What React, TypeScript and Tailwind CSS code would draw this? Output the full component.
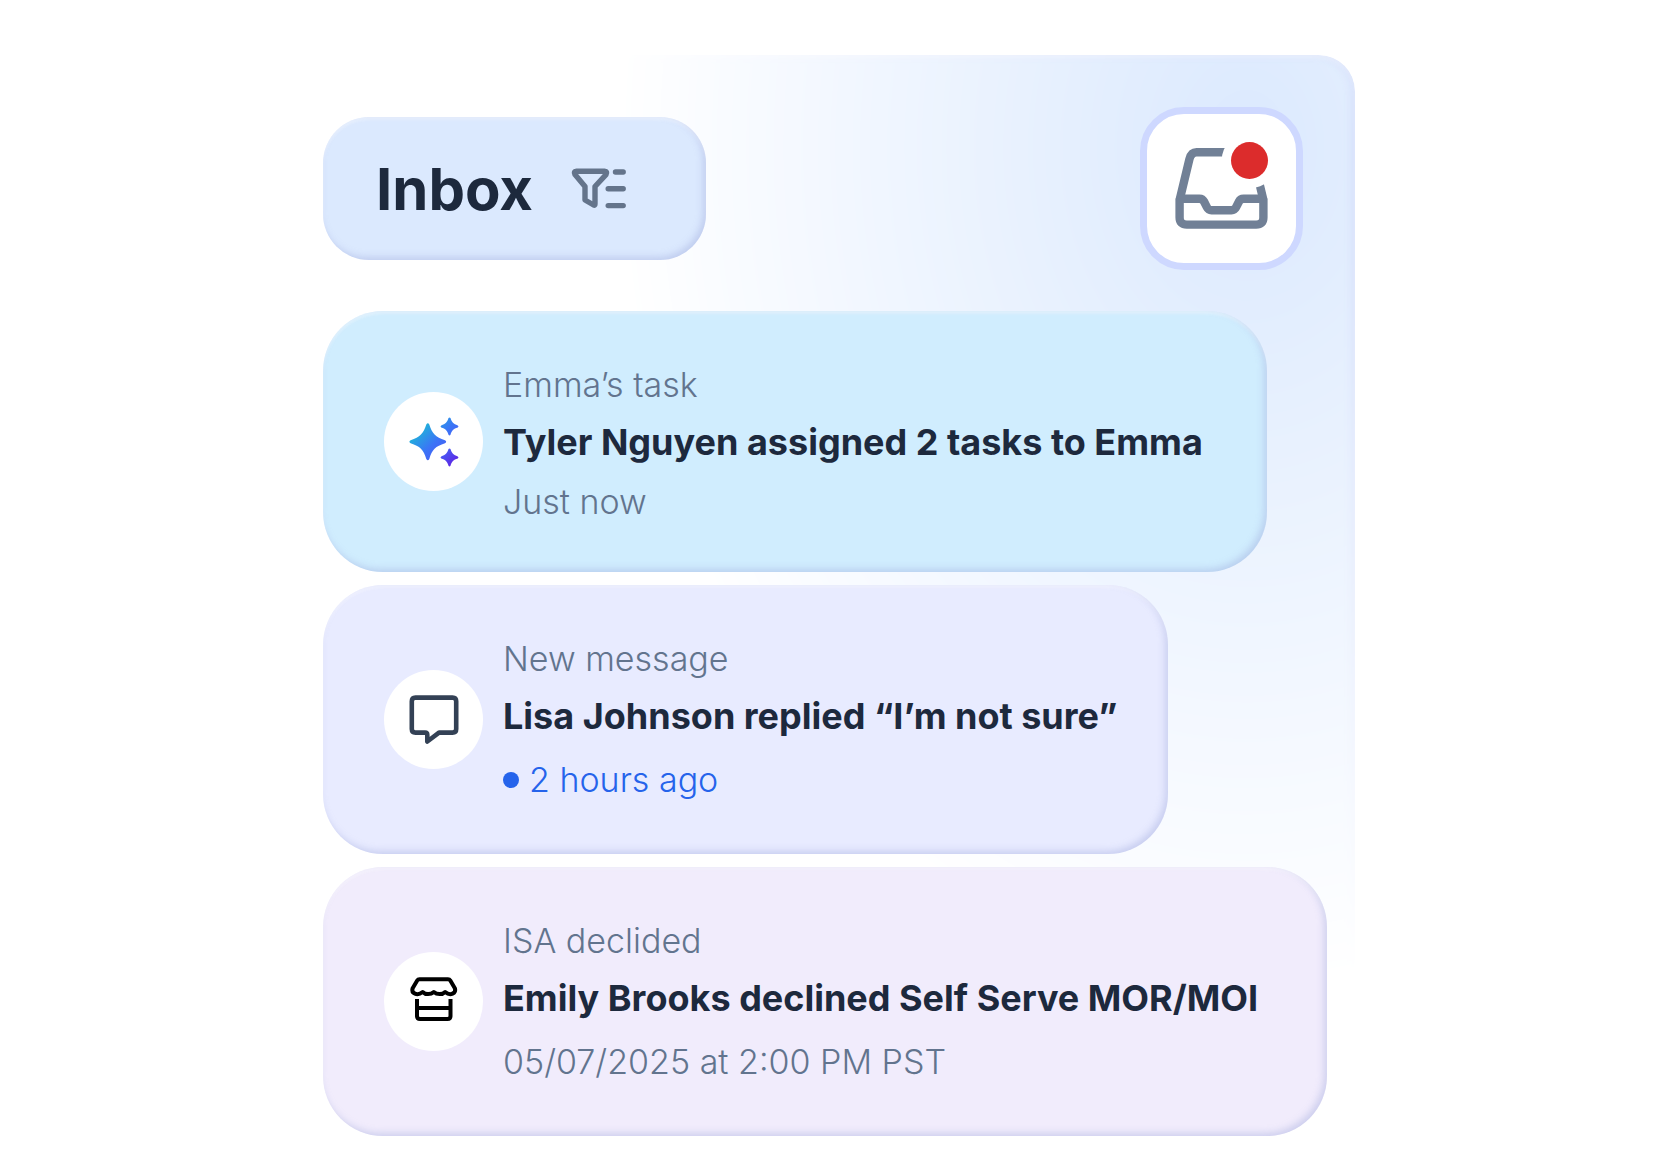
import React from 'react';

// ─── Types ────────────────────────────────────────────────────────────────────

interface Notification {
  id: number;
  label: string;
  title: string;
  time: string;
  unread?: boolean;
  icon: React.ReactNode;
  cardClass: string;
  timeClass: string;
}

// ─── Icons ────────────────────────────────────────────────────────────────────

const FilterIcon: React.FC = () => (
  <svg width="56" height="43" viewBox="0 0 56 43" fill="none" stroke="#64748b" strokeWidth="5.4" strokeLinecap="round" strokeLinejoin="round" aria-hidden="true">
    <path d="M5.5 4.2H33.5Q36.8 4.4 35 7.6L24 19.5V37Q24 38.6 22.6 38L14 33V19.5L4 7.6Q2.2 4.4 5.5 4.2Z" />
    <path d="M44.5 5H52.2M37.2 21.8H52.2M37.2 38.6H52.2" />
  </svg>
);

const TrayIcon: React.FC = () => (
  <svg width="95" height="84" viewBox="0 0 95 84" fill="none" stroke="#718096" strokeWidth="8.4" className="overflow-visible" aria-hidden="true">
    <path d="M5.6 53L15.4 12.2Q17.2 5.3 22.5 5.3H72.5Q77.8 5.3 79.6 12.2L89.4 53" />
    <path d="M5.6 51.7V70.5Q5.6 77.6 12.8 77.6H82.2Q89.4 77.6 89.4 70.5V51.7" />
    <path d="M5.6 51.7H25.5Q28.6 51.7 30 54.5L33 60.4Q34.4 63.2 37.5 63.2H57.5Q60.6 63.2 62 60.4L65 54.5Q66.4 51.7 69.5 51.7H89.4" />
    <circle cx="75.5" cy="13.5" r="27.8" fill="#ffffff" stroke="none" />
    <circle cx="75.5" cy="13.5" r="18.5" fill="#dc2c2c" stroke="none" />
  </svg>
);

const SparklesIcon: React.FC = () => (
  <svg width="50" height="50" viewBox="0 0 50 50" className="overflow-visible" aria-hidden="true">
    <defs>
      <linearGradient id="sparkle" x1="6" y1="6" x2="44" y2="46" gradientUnits="userSpaceOnUse">
        <stop offset="0" stopColor="#16c8d0" />
        <stop offset="0.5" stopColor="#3b74f6" />
        <stop offset="0.7" stopColor="#4562f5" />
        <stop offset="1" stopColor="#5b2be6" />
      </linearGradient>
    </defs>
    <g fill="url(#sparkle)">
      <path d="M17.3 7.6Q18.8 5 20.3 7.6C23 16.5 26.5 20.4 36 23.3Q38.4 24.8 36 26.3C26.5 29.2 23 33 20.3 42Q18.8 44.6 17.3 42C14.6 33 11 29.2 1.6 26.3Q-.8 24.8 1.6 23.3C11 20.4 14.6 16.5 17.3 7.6Z" />
      <path d="M39.5 1.1Q40.5 -.3 41.5 1.1C42.8 5.4 44.4 7.1 48.8 8.4Q50.2 9.4 48.8 10.4C44.4 11.7 42.8 13.4 41.5 17.7Q40.5 19.1 39.5 17.7C38.2 13.4 36.6 11.7 32.2 10.4Q30.8 9.4 32.2 8.4C36.6 7.1 38.2 5.4 39.5 1.1Z" />
      <path d="M39.5 32.1Q40.5 30.7 41.5 32.1C42.8 36.4 44.4 38.1 48.8 39.4Q50.2 40.4 48.8 41.4C44.4 42.7 42.8 44.4 41.5 48.7Q40.5 50.1 39.5 48.7C38.2 44.4 36.6 42.7 32.2 41.4Q30.8 40.4 32.2 39.4C36.6 38.1 38.2 36.4 39.5 32.1Z" />
    </g>
  </svg>
);

const MessageIcon: React.FC = () => (
  <svg width="50" height="50" viewBox="0 0 50 50" fill="none" stroke="#334155" strokeWidth="4.6" strokeLinejoin="round" aria-hidden="true">
    <path d="M6.5 2.6H43.5Q47.2 2.6 47.2 6.3V34Q47.2 37.6 43.5 37.6H30L18.3 46.5V39.8Q18.3 37.6 16.1 37.6H6.5Q2.8 37.6 2.8 34V6.3Q2.8 2.6 6.5 2.6Z" />
  </svg>
);

const StoreIcon: React.FC = () => (
  <svg width="50" height="50" viewBox="0 0 50 50" fill="none" stroke="#000000" strokeWidth="4" strokeLinejoin="round" aria-hidden="true">
    <path d="M10.5 2.2H39Q40.5 2.2 41.3 3.6L46 11.5C47.3 16 41.5 19.5 36.2 15C33.4 17.8 28 17.8 24.8 15C21.6 17.8 16.4 17.8 13.6 15C8 19.5 2.2 16 3.5 11.5L8.2 3.6Q9 2.2 10.5 2.2Z" />
    <path d="M8 22V39Q8 42 11 42H38.5Q41.5 42 41.5 39V22M8 31H41.5" />
  </svg>
);

// ─── Data ─────────────────────────────────────────────────────────────────────

const notifications: Notification[] = [
  {
    id: 1,
    label: 'Emma’s task',
    title: 'Tyler Nguyen assigned 2 tasks to Emma',
    time: 'Just now',
    icon: <SparklesIcon />,
    cardClass: 'w-[944px] bg-[#d0edfe]',
    timeClass: 'leading-[62px] text-slate-500',
  },
  {
    id: 2,
    label: 'New message',
    title: 'Lisa Johnson replied “I’m not sure”',
    time: '2 hours ago',
    unread: true,
    icon: <MessageIcon />,
    cardClass: 'w-[845px] bg-[#e8ebff]',
    timeClass: 'leading-[70px] text-[#2563eb]',
  },
  {
    id: 3,
    label: 'ISA declided',
    title: 'Emily Brooks declined Self Serve MOR/MOI',
    time: '05/07/2025 at 2:00 PM PST',
    icon: <StoreIcon />,
    cardClass: 'w-[1004px] bg-[#f1ecfc]',
    timeClass: 'leading-[70px] text-slate-500',
  },
];

const edgeShadow =
  'shadow-[inset_-3px_-3px_7px_rgba(150,160,215,0.38),inset_0px_3px_3px_rgba(255,255,255,0.4)]';

// ─── Sub-components ───────────────────────────────────────────────────────────

const NotificationCard: React.FC<{ item: Notification }> = (props) => {
  const item = props.item;
  const cardClass =
    'flex max-w-full items-center gap-5 rounded-[60px] pl-[61px] pr-6 ' + edgeShadow + ' ' + item.cardClass;
  const timeClass = 'flex items-center gap-[10px] text-[34px] font-light ' + item.timeClass;

  return (
    <li className={cardClass}>
      <span className="flex size-[99px] shrink-0 items-center justify-center rounded-full bg-white">
        {item.icon}
      </span>
      <div className="whitespace-nowrap pt-[46px] pb-[39px]">
        <p className="text-[34px] font-light leading-[56px] text-slate-500">{item.label}</p>
        <h2 className="text-[36px] font-bold leading-[58px] text-slate-800">{item.title}</h2>
        <p className={timeClass}>
          {item.unread && <span className="size-4 rounded-full bg-[#2563eb]" aria-hidden="true" />}
          {item.time}
        </p>
      </div>
    </li>
  );
};

// ─── Main Component ───────────────────────────────────────────────────────────

const App: React.FC = () => {
  return (
    <div className="min-h-screen bg-white pt-[55px] pb-8 font-['Inter',sans-serif]">
      <main className="mx-auto grid max-w-[1034px] grid-cols-1 pr-0.5">

        {/* ── Backdrop ── */}
        <div
          aria-hidden="true"
          className="col-start-1 row-start-1 h-[925px] w-3/4 justify-self-end rounded-tr-[36px] bg-[#dbe9fe] shadow-[inset_-3px_0px_8px_rgba(165,175,240,0.3),inset_0px_3px_4px_rgba(255,255,255,0.5)] [mask-image:radial-gradient(630px_840px_at_86%_10%,black,transparent)]"
        />

        <div className="z-10 col-start-1 row-start-1 pt-[52px]">

          {/* ── Header ── */}
          <header className="flex items-center justify-between pr-[52px]">
            <div className={'flex h-[143px] w-[383px] items-center gap-[38px] rounded-[46px] bg-[#dbe9fe] pl-[53px] ' + edgeShadow}>
              <h1 className="text-[58px] font-bold leading-[80px] text-slate-800">Inbox</h1>
              <button type="button" aria-label="Filter notifications">
                <FilterIcon />
              </button>
            </div>
            <button
              type="button"
              aria-label="Open inbox, new notifications"
              className="flex size-[163px] items-center justify-center rounded-[44px] border-[7px] border-[#ced8ff] bg-white"
            >
              <TrayIcon />
            </button>
          </header>

          {/* ── Notifications ── */}
          <ul className="mt-[41px] flex flex-col gap-[13px]">
            {notifications.map((item) => (
              <NotificationCard key={item.id} item={item} />
            ))}
          </ul>
        </div>
      </main>
    </div>
  );
};

export default App;
